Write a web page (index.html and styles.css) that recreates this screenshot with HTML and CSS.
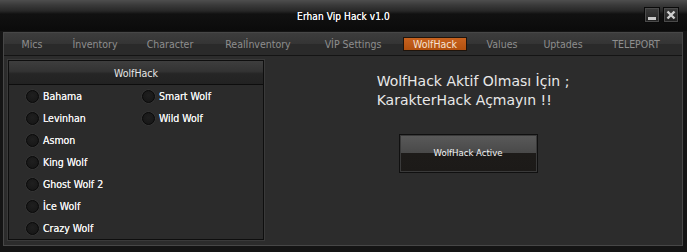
FILE: index.html
```html
<!DOCTYPE html>
<html>
<head>
<meta charset="utf-8">
<title>Erhan Vip Hack v1.0</title>
<link rel="stylesheet" href="styles.css">
</head>
<body>
<div class="window">
  <div class="titlebar">
    <div class="title">Erhan Vip Hack v1.0</div>
    <div class="winbtns">
      <div class="winbtn"><svg width="14" height="14" viewBox="0 0 14 14"><rect x="3" y="9" width="8" height="3" fill="#c9c9c9"/></svg></div>
      <div class="winbtn"><svg width="14" height="14" viewBox="0 0 14 14"><path d="M3.5 3.5 L10.5 10.5 M10.5 3.5 L3.5 10.5" stroke="#cfcfcf" stroke-width="2.4" fill="none"/></svg></div>
    </div>
  </div>
  <div class="frame">
    <div class="panel">
      <div class="tabs">
        <div class="tab w56">Mics</div>
        <div class="tab w70">İnventory</div>
        <div class="tab w80">Character</div>
        <div class="tab w96">Realİnventory</div>
        <div class="tab w94">VİP Settings</div>
        <div class="tab w70"><span class="active">WolfHack</span></div>
        <div class="tab w64">Values</div>
        <div class="tab w58">Uptades</div>
        <div class="tab w88">TELEPORT</div>
      </div>
      <div class="content">
        <div class="group">
          <div class="group-head">WolfHack</div>
          <div class="radios">
            <label class="radio"><span class="dot"></span>Bahama</label>
            <label class="radio"><span class="dot"></span>Levinhan</label>
            <label class="radio"><span class="dot"></span>Asmon</label>
            <label class="radio"><span class="dot"></span>King Wolf</label>
            <label class="radio"><span class="dot"></span>Ghost Wolf 2</label>
            <label class="radio"><span class="dot"></span>İce Wolf</label>
            <label class="radio"><span class="dot"></span>Crazy Wolf</label>
            <label class="radio"><span class="dot"></span>Smart Wolf</label>
            <label class="radio"><span class="dot"></span>Wild Wolf</label>
          </div>
        </div>
        <div class="side">
          <div class="msg">WolfHack Aktif Olması İçin ;<br>KarakterHack Açmayın !!</div>
          <div class="btn"><span>WolfHack Active</span></div>
        </div>
      </div>
    </div>
  </div>
</div>
</body>
</html>
```
FILE: styles.css
```css
* { box-sizing: border-box; }
html, body { margin: 0; padding: 0; }
body {
  background: #121212;
  font-family: "DejaVu Sans Condensed", "DejaVu Sans", sans-serif;
  font-stretch: semi-condensed;
}
.window {
  width: 687px;
  height: 252px;
  display: flex;
  flex-direction: column;
  background: #161616;
  overflow: hidden;
}
.titlebar {
  height: 31px;
  flex: none;
  display: grid;
  grid-template-columns: 1fr auto 1fr;
  align-items: start;
  background: linear-gradient(#4e4e4e 0px, #3a3a3a 5px, #272727 11px, #111 14px, #0b0b0b 100%);
}
.title {
  grid-column: 2;
  color: #f6f6f6;
  font-size: 10px;
  line-height: 12px;
  padding-top: 11px;
  letter-spacing: 0.1px;
  text-shadow: 0 0 0.5px #fff;
}
.winbtns {
  grid-column: 3;
  justify-self: end;
  display: flex;
  gap: 3px;
  padding: 7px 8px 0 0;
}
.winbtn {
  width: 16px;
  height: 16px;
  border: 1px solid #0a0a0a;
  box-shadow: inset 0 0 0 1px #4a4a4a;
  background: linear-gradient(#3c3c3c, #1f1f1f);
  display: flex;
  align-items: center;
  justify-content: center;
}
.frame {
  flex: 1;
  padding: 1px 4px 6px 3px;
  background: #141414;
}
.panel {
  height: 100%;
  border: 1px solid #474747;
  background: #2c2c2c;
  display: flex;
  flex-direction: column;
}
.tabs {
  height: 23px;
  flex: none;
  display: flex;
  background: linear-gradient(#3d3d3d, #343434 50%, #2a2a2a 51%, #2a2a2a);
  border-bottom: 1px solid #141414;
}
.tab {
  display: flex;
  align-items: center;
  justify-content: center;
  color: #8e8e8e;
  font-size: 10.5px;
  white-space: nowrap;
}
.w56 { width: 56px; }
.w58 { width: 58px; }
.w64 { width: 64px; }
.w70 { width: 70px; }
.w80 { width: 80px; }
.w88 { width: 88px; }
.w94 { width: 94px; }
.w96 { width: 96px; }
.tab .active {
  width: 64px;
  height: 14px;
  display: flex;
  align-items: center;
  justify-content: center;
  background: linear-gradient(#c8621f, #b2500f);
  border: 1px solid #1e140c;
  color: #f6e2d2;
}
.content {
  flex: 1;
  display: flex;
  padding: 4px 0 0 4px;
}
.group {
  width: 256px;
  height: 180px;
  border: 1px solid #0e0e0e;
  box-shadow: 0 0 0 1px #3a3a3a;
  background: #2b2b2b;
  display: flex;
  flex-direction: column;
}
.group-head {
  height: 24px;
  flex: none;
  display: flex;
  align-items: center;
  justify-content: center;
  color: #e6e6e6;
  font-size: 10.5px;
  background: linear-gradient(#3e3e3e, #333 45%, #262626 55%, #222);
  border-bottom: 1px solid #0d0d0d;
}
.radios {
  display: grid;
  grid-template-rows: repeat(7, 22px);
  grid-template-columns: 116px 1fr;
  grid-auto-flow: column;
  padding-left: 17px;
}
.radio {
  display: flex;
  align-items: center;
  gap: 4px;
  color: #f0f0f0;
  font-size: 10.5px;
  white-space: nowrap;
  text-shadow: 0 0 0.5px #fff;
}
.dot {
  width: 13px;
  height: 13px;
  border-radius: 50%;
  background: radial-gradient(circle at 50% 40%, #1f1f1f, #151515);
  border: 1px solid #090909;
  box-shadow: 0 0 0 0.5px #3c3c3c;
  flex: none;
}
.side {
  flex: 1;
  display: flex;
  flex-direction: column;
  align-items: center;
  padding-top: 12px;
}
.msg {
  font-family: "DejaVu Sans", sans-serif;
  font-stretch: normal;
  font-size: 14px;
  line-height: 19px;
  color: #e8e8e8;
}
.btn {
  margin-top: 24px;
  margin-right: 10px;
  width: 139px;
  height: 39px;
  border: 1px solid #101010;
  box-shadow: inset 0 0 0 1px #3a3a3a;
  background: linear-gradient(#5a5a5a, #494949 48%, #1d1b19 50%, #1c1a18);
  display: flex;
  align-items: center;
  justify-content: center;
}
.btn span {
  color: #f4f4f4;
  font-size: 9.5px;
  line-height: 12px;
  margin-top: -1px;
}
```
